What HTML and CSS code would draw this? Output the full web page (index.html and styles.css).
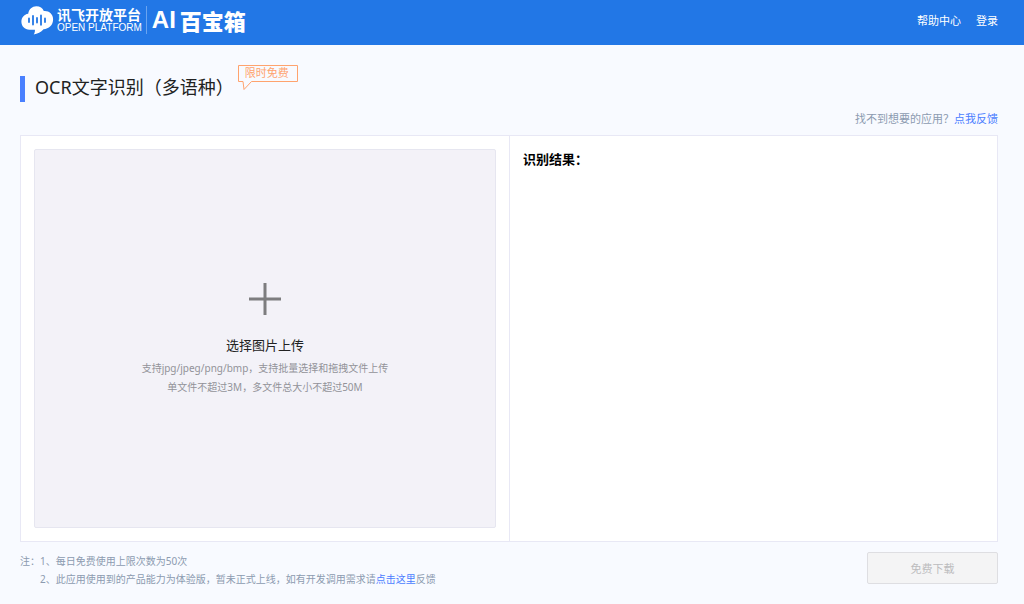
FILE: index.html
```html
<!DOCTYPE html>
<html lang="zh-CN">
<head>
<meta charset="utf-8">
<meta name="viewport" content="width=device-width, initial-scale=1">
<title>OCR文字识别（多语种）</title>
<link rel="stylesheet" href="styles.css">
</head>
<body>
<header class="topbar">
  <a class="brand" href="#">
    <svg class="brand-cloud" width="33" height="29" viewBox="0 0 33 29" aria-hidden="true">
      <path fill="#fff" d="M7.200 7.700C8 3.200 11.200 0.300 15.300 0.300c3.700 0 6.400 1.900 7.500 4.800 4.900-.6 9.200 2.800 9.300 7.900.1 6.400-4.300 9.700-9.600 10.200-2.300 2.700-6.200 4.700-9.800 5.300.9-1.400 1.400-3 1.200-4.800H8.500C3.600 23.400.4 20.100.4 15.700.4 11.500 3.100 8.300 7.200 7.700z"/>
      <path d="M8 12.500v3.600M12 10v8.600M16 12v4.600M20 9.500v9.300M24 12.500v3.600" stroke="#2277e6" stroke-width="1.800" stroke-linecap="round"/>
    </svg>
    <span class="brand-platform">
      <span class="brand-cn">讯飞开放平台</span>
      <span class="brand-en">OPEN PLATFORM</span>
    </span>
    <span class="brand-product"><span class="brand-ai">AI</span><span>百宝箱</span></span>
  </a>
  <nav class="topnav">
    <a href="#">帮助中心</a>
    <a href="#">登录</a>
  </nav>
</header>

<main class="page">
  <div class="heading">
    <h1 class="title">OCR文字识别（多语种）</h1>
    <span class="badge">
      <svg class="badge-shape" width="62" height="27" viewBox="0 0 62 27" aria-hidden="true">
        <path d="M1.500 1.500h59v16H14.500L7 25.500l-1-8H1.500z" fill="none" stroke="#ffa36e"/>
      </svg>
      限时免费
    </span>
  </div>
  <p class="suggest">找不到想要的应用？<a href="#">点我反馈</a></p>

  <div class="workspace">
    <section class="pane">
      <label class="upload" for="file">
        <input class="upload-input" id="file" type="file" multiple accept=".jpg,.jpeg,.png,.bmp">
        <svg class="upload-plus" width="32" height="32" viewBox="0 0 32 32" aria-hidden="true">
          <path d="M16 0v32M0 16h32" stroke="#7d7d7f" stroke-width="3"/>
        </svg>
        <span class="upload-title">选择图片上传</span>
        <span class="upload-hint">支持jpg/jpeg/png/bmp，支持批量选择和拖拽文件上传</span>
        <span class="upload-hint">单文件不超过3M，多文件总大小不超过50M</span>
      </label>
    </section>
    <section class="pane">
      <h2 class="result-title">识别结果：</h2>
    </section>
  </div>

  <footer class="foot">
    <div class="notes">
      <span>注：</span>
      <div>
        <p>1、每日免费使用上限次数为50次</p>
        <p>2、此应用使用到的产品能力为体验版，暂未正式上线，如有开发调用需求请<a href="#">点击这里</a>反馈</p>
      </div>
    </div>
    <button class="download" type="button" disabled>免费下载</button>
  </footer>
</main>
</body>
</html>
```
FILE: styles.css
```css
* {
  box-sizing: border-box;
}

body {
  margin: 0;
  min-height: 100vh;
  display: flex;
  flex-direction: column;
  background: #f8faff;
  color: #222;
  font-family: "Noto Sans", "Noto Sans CJK SC", sans-serif;
  font-size: 11px;
}

h1, h2, p {
  margin: 0;
}

a {
  color: #4a7dff;
  text-decoration: none;
}

.topbar {
  display: flex;
  align-items: center;
  justify-content: space-between;
  min-height: 45px;
  padding: 0 26px 5px 21px;
  background: #2277e6;
}

.brand {
  display: flex;
  align-items: center;
  color: #fff;
}

.brand-cloud {
  margin-right: 3px;
}

.brand-platform {
  display: flex;
  flex-direction: column;
  padding-right: 4px;
  border-right: 1px solid #6aa4f0;
}

.brand-cn {
  font: bold 14px/16px "Noto Sans CJK SC", sans-serif;
}

.brand-en {
  font: 10px/12px "Liberation Sans", sans-serif;
}

.brand-product {
  display: flex;
  gap: 4px;
  margin-left: 5px;
  font: 900 22px/26px "Noto Sans CJK SC", sans-serif;
}

.brand-ai {
  font: bold 24px/26px "Liberation Sans", sans-serif;
}

.topnav {
  display: flex;
  gap: 15px;
}

.topnav a {
  color: #fff;
}

.page {
  flex: 1;
  display: flex;
  flex-direction: column;
  padding: 20px 26px 16px 20px;
}

.heading {
  display: flex;
  align-items: flex-start;
  gap: 3px;
}

.title {
  margin-top: 11px;
  padding: 0 0 4px 10px;
  border-left: 5px solid #4a80ff;
  font-size: 18px;
  font-weight: 400;
  line-height: 22px;
}

.badge {
  position: relative;
  padding: 0 8px;
  color: #ffa36e;
  line-height: 16px;
}

.badge-shape {
  position: absolute;
  left: 0;
  top: -1px;
}

.suggest {
  margin: 8px 0;
  color: #8c9bb0;
  line-height: 17px;
  text-align: right;
}

.workspace {
  flex: 1;
  display: grid;
  grid-template-columns: 1fr 1fr;
  border: 1px solid #e8e8f5;
  background: #fff;
}

.pane {
  display: flex;
  padding: 13px;
}

.pane + .pane {
  border-left: 1px solid #e8e8f5;
}

.upload {
  flex: 1;
  display: flex;
  flex-direction: column;
  align-items: center;
  justify-content: center;
  padding-top: 3px;
  border: 1px solid #e6e6f0;
  border-radius: 2px;
  background: #f3f2f8;
  cursor: pointer;
}

.upload-input {
  position: absolute;
  width: 1px;
  height: 1px;
  opacity: 0;
}

.upload-plus {
  margin-bottom: 20px;
}

.upload-title {
  margin-bottom: 4px;
  font-size: 13px;
  line-height: 20px;
}

.upload-hint {
  color: #929299;
  font-size: 10px;
  line-height: 19px;
}

.result-title {
  color: #000;
  font-size: 13px;
  line-height: 20px;
}

.foot {
  display: flex;
  align-items: flex-start;
  justify-content: space-between;
  padding-top: 10px;
}

.notes {
  display: flex;
  color: #8c9bb0;
  font-size: 10px;
  line-height: 18px;
}

.download {
  width: 131px;
  height: 32px;
  border: 1px solid #dedee2;
  border-radius: 2px;
  background: #f4f4f5;
  color: #bcbcbe;
  font: inherit;
}
```
